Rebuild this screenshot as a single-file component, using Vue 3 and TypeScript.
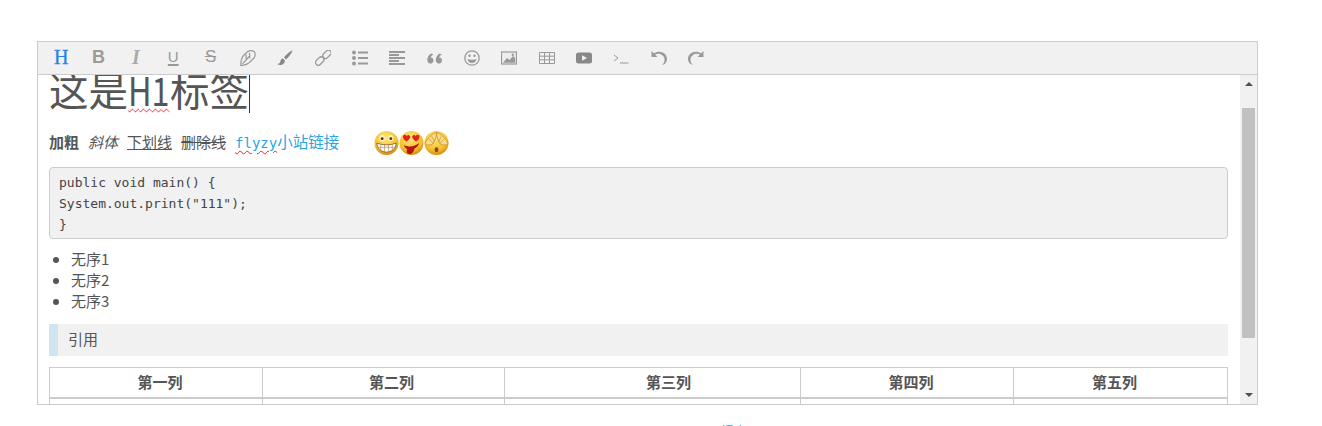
<script setup lang="ts">
const headers: string[] = ['第一列', '第二列', '第三列', '第四列', '第五列']
const items: string[] = ['无序1', '无序2', '无序3']
</script>

<template>
  <div class="page">
    <section class="editor">
      <div class="toolbar">
        <span class="tool active"><span class="tx h">H</span></span>
        <span class="tool"><span class="tx b">B</span></span>
        <span class="tool"><span class="tx i">I</span></span>
        <span class="tool"><span class="tx u">U</span></span>
        <span class="tool"><span class="tx s">S</span></span>
        <span class="tool">
          <svg viewBox="0 0 16 16" class="ic"><path d="M.8 15.500 C.8 11 2 7 4 5 L7.500 1.800 C9.500 .5 12 .3 14 1.500 L15 3 C15.500 5 15 6.500 14 8 L10.500 11.500 C8 14 5 15.500 .8 15.500Z M2.500 13.800 L10 5.500 M6 4.500 L6.300 10.500 M9.500 2.800 L9.800 8.500" fill="none" stroke="#999" stroke-width="1.200"/></svg>
        </span>
        <span class="tool">
          <svg viewBox="0 0 16 16" class="ic"><path d="M15.500 .5 C14 .5 8.500 5 7 7.500 L9 9.500 C11.500 7.500 15.500 2 15.500 .5Z M5.800 8.500 C3.500 8.800 3.800 11 3 12.500 C2.500 13.500 1.500 13.800 .5 14 C2.500 15.500 7 16 8 10.500Z" fill="#888"/></svg>
        </span>
        <span class="tool">
          <svg viewBox="0 0 16 16" class="ic"><g fill="none" stroke="#999" stroke-width="1.300"><rect x="8" y="-1.800" width="5.500" height="9.500" rx="2.700" transform="rotate(45 10.750 5.450) translate(0 .8)"/><rect x="2.500" y="7.300" width="5.500" height="9.500" rx="2.700" transform="rotate(45 5.250 10.550) translate(0 -.8)"/></g></svg>
        </span>
        <span class="tool">
          <svg viewBox="0 0 16 16" class="ic"><g fill="#999"><circle cx="2" cy="2.500" r="2"/><circle cx="2" cy="8" r="2"/><circle cx="2" cy="13.500" r="2"/><rect x="6" y="1.500" width="10" height="2"/><rect x="6" y="7" width="10" height="2"/><rect x="6" y="12.500" width="10" height="2"/></g></svg>
        </span>
        <span class="tool">
          <svg viewBox="0 0 16 16" class="ic"><g fill="#999"><rect y="1" width="16" height="2"/><rect y="4" width="10" height="2"/><rect y="7" width="16" height="2"/><rect y="10" width="10" height="2"/><rect y="13" width="16" height="2"/></g></svg>
        </span>
        <span class="tool">
          <svg viewBox="0 0 16 16" class="ic"><path d="M4 3.500 C1.500 5 .3 7.500 .3 10 C.3 12.300 1.500 13.500 3.200 13.500 C5 13.500 6.500 12.300 6.500 10.400 C6.500 8.600 5.300 7.500 3.800 7.500 C4 6.300 5 5 6.500 4.500Z M12.500 3.500 C10 5 8.800 7.500 8.800 10 C8.800 12.300 10 13.500 11.700 13.500 C13.500 13.500 15 12.300 15 10.400 C15 8.600 13.800 7.500 12.300 7.500 C12.500 6.300 13.500 5 15 4.500Z" fill="#999"/></svg>
        </span>
        <span class="tool">
          <svg viewBox="0 0 16 16" class="ic"><circle cx="8" cy="8" r="7.200" fill="none" stroke="#999" stroke-width="1.300"/><circle cx="5.500" cy="5.800" r="1.200" fill="#999"/><circle cx="10.500" cy="5.800" r="1.200" fill="#999"/><path d="M3.500 9 C5 10 11 10 12.500 9 C12 11.500 10.500 13 8 13 C5.500 13 4 11.500 3.500 9Z" fill="#999"/></svg>
        </span>
        <span class="tool">
          <svg viewBox="0 0 16 16" class="ic"><rect x=".5" y="2" width="15" height="12" fill="#eee" stroke="#999" stroke-width="1.200"/><path d="M2 12.800 L6 8 L8.500 10 L12 6 L14.200 8 V12.800Z" fill="#999"/><circle cx="11.800" cy="4.800" r="1.200" fill="#999"/></svg>
        </span>
        <span class="tool">
          <svg viewBox="0 0 16 16" class="ic"><path d="M.5 2.500H15.500V13.500H.5Z M.5 6.200H15.500 M.5 9.800H15.500 M5.500 2.500V13.500 M10.500 2.500V13.500" fill="none" stroke="#999"/></svg>
        </span>
        <span class="tool">
          <svg viewBox="0 0 16 16" class="ic"><rect y="2.500" width="16" height="11" rx="2.500" fill="#888"/><path d="M6 5.200 L11 8 L6 10.800Z" fill="#f1f1f1"/></svg>
        </span>
        <span class="tool">
          <svg viewBox="0 0 16 16" class="ic"><path d="M1 5 L5 8 L1 11 M7 13H15.500" fill="none" stroke="#999" stroke-width="1"/></svg>
        </span>
        <span class="tool">
          <svg viewBox="0 0 16 16" class="ic"><path d="M.5 1 V7 H6.500 L4 4.500 C7.500 2.500 13 4.500 13.500 9 C13.700 11.300 12.800 13.500 11 15 C14 14.500 16 12 16 9 C16 3 9 -.5 2.800 3.300Z" fill="#999"/></svg>
        </span>
        <span class="tool">
          <svg viewBox="0 0 16 16" class="ic"><path d="M15.500 1 V7 H9.500 L12 4.500 C8.500 2.500 3 4.500 2.500 9 C2.300 11.300 3.200 13.500 5 15 C2 14.500 0 12 0 9 C0 3 7 -.5 13.200 3.300Z" fill="#999"/></svg>
        </span>
      </div>

      <div class="body">
        <div class="content">
          <h1 class="title">这是<span class="narrow"><span class="typo">H1</span></span>标签<span class="caret"></span></h1>
          <p class="line">
            <strong>加粗</strong>
            <em>斜体</em>
            <u>下划线</u>
            <s>删除线</s>
            <a class="link"><span class="typo mono">flyzy</span>小站链接</a>
            <span class="faces">
              <svg viewBox="0 0 26 26" class="face">
                <defs>
                  <radialGradient id="g1" cx="45%" cy="30%" r="70%"><stop offset="0" stop-color="#ffe680"/><stop offset=".7" stop-color="#f5c02e"/><stop offset="1" stop-color="#d68a14"/></radialGradient>
                </defs>
                <circle cx="13" cy="13" r="12.500" fill="url(#g1)"/>
                <ellipse cx="8.500" cy="8" rx="2.700" ry="3.200" fill="#fff3c0"/><ellipse cx="17.500" cy="8" rx="2.700" ry="3.200" fill="#fff3c0"/>
                <circle cx="8.500" cy="8.500" r="1.500" fill="#5a3208"/><circle cx="17.500" cy="8.500" r="1.500" fill="#5a3208"/>
                <path d="M3 13 C8 15.500 18 15.500 23 13 C23 19 18 22.500 13 22.500 C8 22.500 3 19 3 13Z" fill="#fff" stroke="#7a4a10" stroke-width=".8"/>
                <path d="M7 14.500V21 M11 15V22.500 M15 15V22.500 M19 14.500V21 M4 17.500H22" stroke="#a98a55" stroke-width=".7" fill="none"/>
              </svg>
              <svg viewBox="0 0 26 26" class="face">
                <circle cx="13" cy="13" r="12.500" fill="url(#g1)"/>
                <path d="M7.500 11.500 C3 8.500 3.500 4.500 6 4.500 C7 4.500 7.500 5 8 6 C8.500 5 9.500 4.500 10.500 5 C13 6 11.500 9.500 7.500 11.500Z" fill="#e2231a"/>
                <path d="M18 11.500 C14 9.500 12.500 6 15 5 C16 4.500 17 5 17.500 6 C18 5 18.500 4.500 19.500 4.500 C22 4.500 22.500 8.500 18 11.500Z" fill="#e2231a"/>
                <path d="M5 15 C10 17.500 16 17 21 13 C20.500 16 18 18 16 19 C15.500 22 13.500 25 10.500 24.500 C8 24 7.500 22 8.500 19.500 C7 18.500 5.500 17 5 15Z" fill="#b5170f"/>
              </svg>
              <svg viewBox="0 0 26 26" class="face">
                <circle cx="13" cy="13" r="12.500" fill="url(#g1)"/>
                <path d="M13 2 C9 3 3 8 1 14 C3 15.500 6 15.500 9 14 C11 11 13 7 13 2Z M13 2 C17 3 23 8 25 14 C23 15.500 20 15.500 17 14 C15 11 13 7 13 2Z" fill="#f8dd8c" stroke="#c98f24" stroke-width=".8"/>
                <path d="M5 9 L9.500 13 M8 6 L11 12 M21 9 L16.500 13 M18 6 L15 12" stroke="#c98f24" stroke-width=".7" fill="none"/>
                <ellipse cx="13" cy="20" rx="2" ry="2.500" fill="#8a4a10"/>
              </svg>
            </span>
          </p>
          <pre class="code">public void main() {
System.out.print("111");
}</pre>
          <ul class="list">
            <li v-for="item in items" :key="item">{{ item }}</li>
          </ul>
          <blockquote class="quote">引用</blockquote>
          <table class="grid">
            <colgroup>
              <col class="c1" /><col class="c2" /><col class="c3" /><col class="c4" /><col class="c5" />
            </colgroup>
            <thead>
              <tr><th v-for="h in headers" :key="h">{{ h }}</th></tr>
            </thead>
            <tbody>
              <tr><td v-for="h in headers" :key="h">&nbsp;</td></tr>
            </tbody>
          </table>
        </div>
        <div class="scrollbar">
          <span class="arrow up"></span>
          <div class="track"><div class="thumb"></div></div>
          <span class="arrow down"></span>
        </div>
      </div>
    </section>
    <div class="below">提交</div>
  </div>
</template>

<style>
html, body { margin: 0; height: 100%; overflow: hidden; background: #fff; }
</style>

<style scoped>
.page {
  padding: 41px 0 0 37px;
  height: 385px;
  overflow: hidden;
  font-family: "Noto Sans CJK SC", "Liberation Sans", sans-serif;
  color: #555;
  font-size: 15px;
}
.editor {
  width: 1219px;
  border: 1px solid #ccc;
}
.toolbar {
  display: flex;
  align-items: center;
  height: 32px;
  padding-left: 4.500px;
  background: #f1f1f1;
  border-bottom: 1px solid #ccc;
}
.tool {
  flex: 0 0 37.350px;
  display: flex;
  align-items: center;
  justify-content: center;
  height: 100%;
}
.ic { width: 16px; height: 16px; display: block; margin-top: -1px; }
.tx {
  color: #999;
  font-family: "Liberation Sans", sans-serif;
  font-size: 17px;
  line-height: 20px;
  margin-top: -2px;
}
.active .h { color: #1e84ec; font-family: "Liberation Serif", serif; font-size: 20px; font-weight: 400; -webkit-text-stroke: .3px #1e84ec; }
.b { font-weight: 700; color: #a09a94; font-size: 18px; }
.i { font-family: "Liberation Serif", serif; font-style: italic; font-weight: 700; color: #aaa; font-size: 20px; }
.u { text-decoration: underline; text-underline-offset: 2px; text-decoration-thickness: 2px; font-size: 15px; }
.s { text-decoration: line-through; padding: 0 2px; font-size: 17px; }

.body {
  display: flex;
  height: 329px;
  overflow: hidden;
}
.content {
  flex: 1;
  min-width: 0;
  padding: 0 12px 0 11px;
  overflow: hidden;
}
.title {
  margin: -6px 0 21px;
  height: 40px;
  font-size: 39.500px;
  line-height: 40px;
  font-weight: 400;
  white-space: nowrap;
}
.narrow {
  display: inline-block;
  width: 42px;
  transform: scaleX(.82);
  transform-origin: left center;
}
.typo {
  text-decoration: underline wavy #e22;
  text-decoration-thickness: 1px;
  text-underline-offset: 2px;
}
.caret {
  display: inline-block;
  width: 1px;
  height: 39px;
  background: #333;
  vertical-align: -7px;
}
.line {
  display: flex;
  align-items: flex-start;
  gap: 9px;
  height: 26px;
  margin: 0 0 11px;
  font-size: 15px;
  line-height: 23px;
}
.line strong { font-weight: 700; }
.line em { font-style: italic; }
.link { color: #2ba4e0; font-size: 15.500px; }
.mono { font-family: "DejaVu Sans Mono", monospace; font-size: 14px; }
.faces { display: flex; margin-left: 26px; }
.face { width: 25px; height: 26px; display: block; }
.code {
  margin: 0 0 9px;
  height: 66px;
  padding: 4px 9px 0;
  border: 1px solid #ccc;
  border-radius: 4px;
  background: #f1f1f1;
  font-family: "DejaVu Sans Mono", monospace;
  font-size: 13px;
  line-height: 21px;
  color: #444;
}
.list {
  margin: 0 0 13px;
  padding-left: 22px;
  line-height: 21px;
  font-size: 15px;
}
.quote {
  margin: 0 0 11px;
  height: 32px;
  padding-left: 10px;
  border-left: 9px solid #d0e5f2;
  background: #f1f1f1;
  line-height: 30px;
  font-size: 15px;
}
.grid {
  width: 1178px;
  table-layout: fixed;
  border-collapse: collapse;
  font-size: 15px;
}
.c1 { width: 213px; }
.c2 { width: 242px; }
.c3 { width: 296px; }
.c4 { width: 213px; }
.c5 { width: 214px; }
.grid th, .grid td {
  border: 1px solid #ccc;
  padding: 0;
  text-align: center;
  line-height: 28px;
}
.grid th { border-bottom: 2px solid #ccc; font-weight: 700; padding-bottom: 2px; line-height: 27px; }
.grid th:nth-child(1) { padding-left: 8px; }
.grid th:nth-child(2) { padding-left: 16px; }
.grid th:nth-child(3) { padding-left: 32px; }
.grid th:nth-child(4) { padding-left: 8px; }
.grid th:nth-child(5) { padding-right: 12px; }

.scrollbar {
  flex: 0 0 17px;
  display: flex;
  flex-direction: column;
  align-items: center;
  background: #f1f1f1;
}
.arrow { width: 0; height: 0; border-left: 4px solid transparent; border-right: 4px solid transparent; flex: none; }
.up { border-bottom: 4px solid #505050; margin: 7px 0 6px; }
.down { border-top: 4px solid #505050; margin: 6px 0 7px; }
.track { flex: 1; width: 100%; padding: 16px 2px 0; box-sizing: border-box; }
.thumb { height: 230px; background: #c1c1c1; }

.below {
  margin: 17px 0 0;
  width: 1394px;
  text-align: center;
  color: #3a9bd0;
  font-size: 13px;
  line-height: 18px;
}
</style>
